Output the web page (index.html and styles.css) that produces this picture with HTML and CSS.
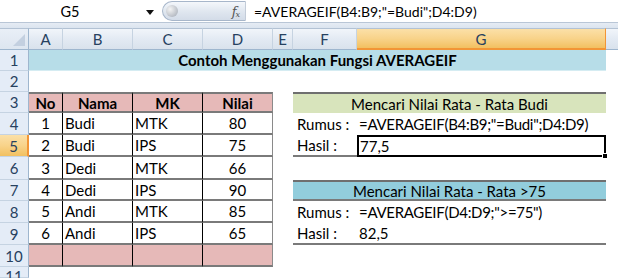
FILE: index.html
```html
<!DOCTYPE html>
<html>
<head>
<meta charset="utf-8">
<link rel="stylesheet" href="styles.css">
</head>
<body>
<div class="app">
  <div class="fbar">
    <div class="namebox">G5</div>
    <div class="nb-arrow"></div>
    <div class="capsule"><span class="knob"></span><span class="fx">f<sub>x</sub></span></div>
    <div class="formula">=AVERAGEIF(B4:B9;"=Budi";D4:D9)</div>
  </div>
  <div class="band"></div>
  <div class="sheet">
    <!-- header row -->
    <div class="corner"><span class="tri"></span></div>
    <div class="ch">A</div><div class="ch">B</div><div class="ch">C</div><div class="ch">D</div>
    <div class="ch">E</div><div class="ch">F</div><div class="ch ch-sel">G</div><div class="ch ch-last"></div>

    <!-- row 1 -->
    <div class="rh">1</div>
    <div class="title span7">Contoh Menggunakan Fungsi AVERAGEIF</div>
    <div class="c"></div>

    <!-- row 2 -->
    <div class="rh">2</div>
    <div class="c span8"></div>

    <!-- row 3 -->
    <div class="rh">3</div>
    <div class="t th top vl">No</div><div class="t th top vl">Nama</div><div class="t th top vl">MK</div><div class="t th top vr">Nilai</div>
    <div class="c"></div>
    <div class="g-head green span2">Mencari Nilai Rata - Rata Budi</div>
    <div class="c"></div>

    <!-- row 4 -->
    <div class="rh">4</div>
    <div class="t ctr vl">1</div><div class="t lft vl">Budi</div><div class="t lft vl">MTK</div><div class="t ctr vr">80</div>
    <div class="c"></div>
    <div class="c lbl">Rumus :</div><div class="c val fml">=AVERAGEIF(B4:B9;"=Budi";D4:D9)</div>
    <div class="c"></div>

    <!-- row 5 -->
    <div class="rh rh-sel">5</div>
    <div class="t ctr vl">2</div><div class="t lft vl">Budi</div><div class="t lft vl">IPS</div><div class="t ctr vr">75</div>
    <div class="c"></div>
    <div class="c lbl bot">Hasil :</div><div class="c val bot sel">77,5<span class="handle"></span></div>
    <div class="c"></div>

    <!-- row 6 -->
    <div class="rh">6</div>
    <div class="t ctr vl">3</div><div class="t lft vl">Dedi</div><div class="t lft vl">MTK</div><div class="t ctr vr">66</div>
    <div class="c span4"></div>

    <!-- row 7 -->
    <div class="rh">7</div>
    <div class="t ctr vl">4</div><div class="t lft vl">Dedi</div><div class="t lft vl">IPS</div><div class="t ctr vr">90</div>
    <div class="c"></div>
    <div class="g-head blue span2 bot">Mencari Nilai Rata - Rata &gt;75</div>
    <div class="c"></div>

    <!-- row 8 -->
    <div class="rh">8</div>
    <div class="t ctr vl">5</div><div class="t lft vl">Andi</div><div class="t lft vl">MTK</div><div class="t ctr vr">85</div>
    <div class="c"></div>
    <div class="c lbl">Rumus :</div><div class="c val fml">=AVERAGEIF(D4:D9;"&gt;=75")</div>
    <div class="c"></div>

    <!-- row 9 -->
    <div class="rh">9</div>
    <div class="t ctr vl">6</div><div class="t lft vl">Andi</div><div class="t lft vl">IPS</div><div class="t ctr vr">65</div>
    <div class="c"></div>
    <div class="c lbl bot">Hasil :</div><div class="c val bot">82,5</div>
    <div class="c"></div>

    <!-- row 10 -->
    <div class="rh">10</div>
    <div class="t pink vl"></div><div class="t pink vl"></div><div class="t pink vl"></div><div class="t pink vr"></div>
    <div class="c span4"></div>

    <!-- row 11 -->
    <div class="rh rh-cut">11</div>
    <div class="c span8"></div>
  </div>
</div>
</body>
</html>
```

FILE: styles.css
```css
* { box-sizing: border-box; }
html, body { margin: 0; padding: 0; background: #ffffff; }
body { font-family: "Lato", "Liberation Sans", sans-serif; color: #000; }

.app { width: 618px; height: 278px; overflow: hidden; }

/* formula bar */
.fbar {
  height: 23px;
  display: flex;
  align-items: center;
  background: #ffffff;
  border-bottom: 1px solid #b9c6d6;
}
.namebox {
  width: 140px;
  text-align: center;
  font-size: 14.5px;
  color: #000;
  padding-top: 1px;
}
.nb-arrow {
  width: 0; height: 0;
  border-left: 4px solid transparent;
  border-right: 4px solid transparent;
  border-top: 5px solid #111;
  margin-left: 6px;
  margin-top: 2px;
}
.capsule {
  margin-left: 8px;
  width: 84px;
  height: 20px;
  border: 1px solid #a7b6ca;
  border-right-color: #c3ccd8;
  border-radius: 10px 0 0 10px;
  background: linear-gradient(#f4f7fb, #dfe6ef 55%, #d3dce8);
  display: flex;
  align-items: center;
  justify-content: space-between;
  padding: 0 6px 0 3px;
}
.knob {
  width: 12px; height: 12px; border-radius: 50%;
  background: radial-gradient(circle at 35% 35%, #f4f4f4, #b9bec6 70%, #a5abb4);
}
.fx {
  font-family: "DejaVu Serif", "Liberation Serif", serif;
  font-style: italic;
  font-size: 13px;
  color: #555;
  letter-spacing: -1px;
}
.fx sub { font-size: 8px; vertical-align: -1px; }
.formula {
  margin-left: 8px;
  font-size: 14px;
  color: #000;
  padding-top: 1px;
  white-space: nowrap;
}
.band {
  height: 5px;
  background: linear-gradient(#e6ecf4, #dbe4ef);
}

/* sheet grid */
.sheet {
  display: grid;
  grid-template-columns: 29px 34px 70px 70px 70px 20px 64px 249px 12px;
  grid-template-rows: 22px 21px 21px 21px 22px 22px 23px 21px 22px 22px 22px 11px;
  font-size: 15px;
}
.span2 { grid-column: span 2; }
.span4 { grid-column: span 4; }
.span7 { grid-column: span 7; }
.span8 { grid-column: span 8; }

.corner {
  background: linear-gradient(#e9eff7, #dde6f0);
  border-right: 1px solid #9eb6ce;
  border-bottom: 1px solid #9eb6ce;
  border-top: 1px solid #b3c2d4;
  position: relative;
}
.tri {
  position: absolute;
  right: 3px; bottom: 3px;
  width: 0; height: 0;
  border-left: 12px solid transparent;
  border-bottom: 12px solid #c3d0e0;
}
.ch {
  background: linear-gradient(#f1f5fa, #e3eaf3 50%, #d9e2ec);
  border-right: 1px solid #c6d3e1;
  border-bottom: 1px solid #9eb6ce;
  border-top: 1px solid #b3c2d4;
  color: #27415f;
  display: flex; align-items: center; justify-content: center;
  font-size: 15px;
}
.ch-sel {
  background: linear-gradient(#fbe0a8, #f8d38a 50%, #f2c060);
  border-right: 1px solid #f29536;
  border-bottom: 2px solid #f29536;
  color: #27415f;
}
.ch-last { border-right: none; }

.rh {
  background: #e4ecf7;
  border-right: 1px solid #9eb6ce;
  border-bottom: 1px solid #c5d3e2;
  color: #27415f;
  display: flex; align-items: center; justify-content: center;
  font-size: 15px;
}
.rh-cut { align-items: flex-start; padding-top: 2px; line-height: 15px; }
.rh-sel {
  background: linear-gradient(#fbe0a8, #f8d38a 50%, #f2c060);
  border-right: 2px solid #f29536;
}

.c { background: #fff; display: flex; align-items: center; white-space: nowrap; }

.title {
  background: #b7dde8;
  border-bottom: 1px solid #d5ecf2;
  font-weight: bold;
  display: flex; align-items: center; justify-content: center;
}

.t {
  background: #fff;
  border-bottom: 2px solid #7a7a7a;
  display: flex; align-items: center;
  white-space: nowrap;
}
.th { background: #e6b9b8; font-weight: bold; justify-content: center; }
.top { border-top: 2px solid #7a7a7a; }
.vl { border-right: 1px solid #000; }
.vr { border-right: 1px solid #8a8a8a; }
.ctr { justify-content: center; }
.lft { padding-left: 2px; }
.pink { background: #e6b9b8; }

.g-head {
  border-top: 2px solid #6f6f6f;
  display: flex; align-items: center; justify-content: center;
  white-space: nowrap;
}
.green { background: #d8e4bc; }
.blue { background: #92cddc; }
.bot { border-bottom: 2px solid #7a7a7a; }

.lbl { padding-left: 4px; }
.val { padding-left: 2px; }
.fml { letter-spacing: -0.3px; }

.sel {
  position: relative;
  border: 2px solid #000;
  padding-left: 1px;
}
.handle {
  position: absolute;
  right: -4px; bottom: -4px;
  width: 6px; height: 6px;
  background: #000;
  border: 1px solid #fff;
}
```
